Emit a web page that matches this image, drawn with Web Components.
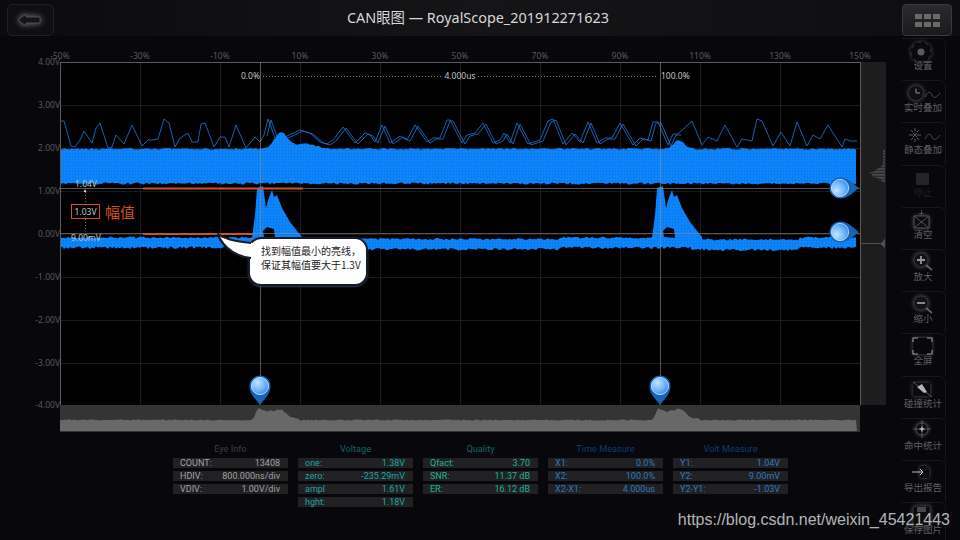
<!DOCTYPE html>
<html>
<head>
<meta charset="utf-8">
<title>CAN眼图</title>
<style>
	html, body { margin: 0; height: 100%; background: #07070c; overflow: hidden; }
	body { font-family: "Noto Sans", "Noto Sans CJK SC", sans-serif; }
</style>
</head>
<body>
<scope-app>
	<scope-header slot="header">CAN眼图 — RoyalScope_201912271623</scope-header>
	<scope-plot slot="plot">
		<callout-bubble>找到幅值最小的亮线，<br>保证其幅值要大于1.3V</callout-bubble>
	</scope-plot>
	<info-strip slot="info">
		<info-panel heading="Eye Info" style="--head:#3f3f44;--val:#a2a2a2">
			<info-row><span slot="k">COUNT:</span>13408</info-row>
			<info-row><span slot="k">HDIV:</span>800.000ns/div</info-row>
			<info-row><span slot="k">VDIV:</span>1.00V/div</info-row>
		</info-panel>
		<info-panel heading="Voltage" style="--head:#0d6668;--val:#1fa4a6">
			<info-row><span slot="k">one:</span>1.38V</info-row>
			<info-row><span slot="k">zero:</span>-235.29mV</info-row>
			<info-row><span slot="k">ampl</span>1.61V</info-row>
			<info-row><span slot="k">hght:</span>1.18V</info-row>
		</info-panel>
		<info-panel heading="Quality" style="--head:#0d6a60;--val:#1fb299">
			<info-row><span slot="k">Qfact:</span>3.70</info-row>
			<info-row><span slot="k">SNR:</span>11.37 dB</info-row>
			<info-row><span slot="k">ER:</span>16.12 dB</info-row>
		</info-panel>
		<info-panel heading="Time Measure" style="--head:#0e3c78;--val:#3078c2">
			<info-row><span slot="k">X1:</span>0.0%</info-row>
			<info-row><span slot="k">X2:</span>100.0%</info-row>
			<info-row><span slot="k">X2-X1:</span>4.000us</info-row>
		</info-panel>
		<info-panel heading="Volt Measure" style="--head:#0e3c78;--val:#3078c2">
			<info-row><span slot="k">Y1:</span>1.04V</info-row>
			<info-row><span slot="k">Y2:</span>9.00mV</info-row>
			<info-row><span slot="k">Y2-Y1:</span>-1.03V</info-row>
		</info-panel>
	</info-strip>
	<tool-bar slot="tools">
		<tool-button icon="gear" shift="0">设置</tool-button>
		<tool-button icon="clock" shift="-2">实时叠加</tool-button>
		<tool-button icon="scatter" shift="-2">静态叠加</tool-button>
		<tool-button icon="stop" shift="-3" off>停止</tool-button>
		<tool-button icon="clear" shift="-4">清空</tool-button>
		<tool-button icon="plus" shift="-3">放大</tool-button>
		<tool-button icon="minus" shift="-2">缩小</tool-button>
		<tool-button icon="full" shift="-2">全屏</tool-button>
		<tool-button icon="hit" shift="-4">碰撞统计</tool-button>
		<tool-button icon="cross" shift="-5">命中统计</tool-button>
		<tool-button icon="export" shift="-3">导出报告</tool-button>
		<tool-button icon="save" shift="-4">保存图片</tool-button>
	</tool-bar>
	<water-mark slot="mark">https://blog.csdn.net/weixin_45421443</water-mark>
</scope-app>

<script>
window.customElements.define('scope-app',
	class extends HTMLElement {
		constructor() {
			super()
			this.attachShadow({ mode: "open" })
			this.shadowRoot.innerHTML = `
			<style>
				:host { display:grid; grid-template-columns:902px 58px; grid-template-rows:36px 1fr; width:960px; height:540px; position:relative; overflow:hidden; }
				.head { grid-column:1 / 3; }
				.left { display:flex; flex-direction:column; }
			</style>
			<div class="head"><slot name="header"></slot></div>
			<div class="left"><slot name="plot"></slot><slot name="info"></slot></div>
			<div><slot name="tools"></slot></div>
			<slot name="mark"></slot>
			`
		}
	}
)

window.customElements.define('scope-header',
	class extends HTMLElement {
		constructor() {
			super()
			this.attachShadow({ mode: "open" })
			this.shadowRoot.innerHTML = `
			<style>
				:host { display:block; height:36px; background:linear-gradient(90deg,#0b0b0e,#151517 50%,#0e0e11); }
				.bar { display:grid; grid-template-columns:47px 1fr 50px; align-items:start; height:100%; padding:4px 8px 0 7px; box-sizing:border-box; }
				.back { height:32px; box-sizing:border-box; border:1px solid #202023; border-radius:5px; background:#0f0f12; display:flex; align-items:center; justify-content:center; padding-right:3px; }
				.back svg { filter:drop-shadow(0 0 3px rgba(255,255,255,.45)); }
				.title { text-align:center; color:#d8d8d8; font-size:14.4px; line-height:28px; }
				.menu { height:32px; box-sizing:border-box; border:1px solid #3a3a3e; border-radius:4px; background:linear-gradient(#2b2b2e,#1a1a1c); display:grid; grid-template-columns:repeat(3,7px); grid-auto-rows:5px; gap:3px 2px; justify-content:center; align-content:center; }
				.menu i { background:#6a6a6a; }
			</style>
			<div class="bar">
				<div class="back"><svg width="24" height="14" viewBox="0 0 24 14"><path d="M1 7 9 1V4H23V10H9V13Z" fill="#151517" stroke="#4c4c4c"/></svg></div>
				<div class="title"><slot></slot></div>
				<div class="menu"><i></i><i></i><i></i><i></i><i></i><i></i></div>
			</div>
			`
		}
	}
)

window.customElements.define('scope-plot',
	class extends HTMLElement {
		// deterministic noise so every photograph is the same
		rand() {
			this.seed = (this.seed * 16807) % 2147483647
			return this.seed / 2147483647
		}

		bump(x) {
			let a = 16 * Math.exp(-(((x - 281) / 9) ** 2)) + 5 * Math.exp(-(((x - 305) / 16) ** 2))
			let b = 9 * Math.exp(-(((x - 679) / 7) ** 2))
			return a + b
		}

		bands() {
			let top = [], bot = [], top2 = [], bot2 = []
			for (let x = 60; x <= 857; x += 2) {
				top.push(`${x},${(148 + this.rand() * 1.6 - this.bump(x)).toFixed(1)}`)
				bot.unshift(`${x},${(182.5 + this.rand() * 2).toFixed(1)}`)
				let drop = 0
				if (x > 295 && x < 560) drop = 1.5
				if (x > 690 && x < 800) drop = 2
				top2.push(`${x},${(236.5 + drop + this.rand() * 2).toFixed(1)}`)
				bot2.unshift(`${x},${(246.5 + drop + this.rand() * 2.5).toFixed(1)}`)
			}
			return [`M${top.concat(bot).join('L')}Z`, `M${top2.concat(bot2).join('L')}Z`]
		}

		spike(ox) {
			let body = [[-8,238],[-5,215],[-3,188],[3,186],[6,208],[8,200],[12,190],[14,197],[17,195],[22,208],[30,222],[42,237],[42,246],[-8,246]]
			let hole = [[3,231],[7,227],[14,229],[15,238],[4,237]]
			let s = a => 'M' + a.map(p => `${p[0] + ox},${p[1]}`).join('L') + 'Z'
			return `<path d="${s(body)}" fill="url(#ripple)"/><path d="${s(hole)}" fill="#02040a"/>`
		}

		histBottom() {
			let pts = []
			let shape = [[-7,0],[-2,12],[3,10],[7,8],[10,10],[14,9],[18,11],[22,10],[30,3],[40,1]]
			for (let x = 60; x <= 857; x += 2) {
				let h = 0
				for (let ox of [260, 660]) {
					let d = x - ox
					for (let i = 0; i < shape.length - 1; i++) {
						let [a, ha] = shape[i], [b, hb] = shape[i + 1]
						if (d >= a && d < b) h = ha + (hb - ha) * (d - a) / (b - a)
					}
				}
				pts.push(`${x},${(420 - h + this.rand() * 1.2 - .6).toFixed(1)}`)
			}
			return `M60,431L${pts.join('L')}L857,431Z`
		}

		histRight() {
			let out = ''
			for (let y = 150; y < 183; y += 1.5) {
				let len = 2 + 15 * Math.exp(-(((y - 173) / 5) ** 2)) * (.5 + this.rand() * .5)
				out += `<rect x="${885 - len}" y="${y}" width="${len}" height=".7"/>`
			}
			for (let y = 239; y < 248; y += 1) {
				let len = y == 243 ? 25 : 5 * Math.exp(-(((y - 243) / 3) ** 2)) * (.6 + this.rand() * .4)
				out += `<rect x="${885 - len}" y="${y}" width="${len}" height=".8"/>`
			}
			return out
		}

		pin(transform) {
			return `<g transform="${transform}">
				<path d="M0,19 C-3,14 -10.5,9 -10.5,0 A10.5,10.5 0 1 1 10.5,0 C10.5,9 3,14 0,19Z" fill="#1763b4"/>
				<circle r="8.6" fill="url(#pinfill)" stroke="#d3eaff" stroke-width=".8"/>
			</g>`
		}

		template() {
			let line = [[60,121],[64,121],[71,146],[75,147],[80,140],[84,131],[92,143],[96,128],[100,123],[108,148],[112,147],[116,135],[124,144],[132,125],[142,146],[148,140],[152,140],[158,139],[164,119],[169,123],[175,147],[180,138],[188,133],[192,142],[198,142],[201,124],[205,123],[214,147],[220,137],[225,137],[229,147],[236,125],[246,148],[255,137],[260,142],[264,135],[268,119],[275,138],[285,137],[300,130],[310,133],[320,142],[327,144],[333,140],[343,127],[355,143],[365,133],[370,135],[375,142],[382,125],[390,143],[400,136],[407,140],[415,125],[427,142],[433,138],[440,138],[447,120],[450,120],[462,143],[467,135],[475,133],[483,123],[493,143],[500,140],[504,133],[510,143],[517,123],[528,144],[540,140],[548,121],[553,119],[563,144],[572,133],[580,142],[588,122],[597,143],[605,138],[612,138],[620,123],[633,145],[640,138],[648,140],[653,122],[658,122],[668,145],[673,134],[678,134],[692,121],[702,145],[708,137],[717,141],[725,125],[737,147],[742,139],[752,141],[757,119],[762,121],[773,146],[781,132],[790,146],[797,122],[807,146],[813,135],[820,139],[828,125],[842,147],[845,139],[850,141],[857,141]]
			let main = line.map(p => p.join(',')).join(' ')
			let ghost = line.filter(p => p[0] > 262 && p[0] < 680).map(p => `${p[0] + 3},${p[1] + 1}`).join(' ')
			let ys = [[62,'4.00V'],[105,'3.00V'],[148,'2.00V'],[191,'1.00V'],[234,'0.00V'],[277,'-1.00V'],[320,'-2.00V'],[363,'-3.00V'],[405,'-4.00V']]
			let pct = ['-50%','-30%','-10%','10%','30%','50%','70%','90%','110%','130%','150%']
			let grid = ''
			ys.slice(1, -1).forEach(y => grid += `<line x1="60" x2="860" y1="${y[0]}" y2="${y[0]}"/>`)
			pct.forEach((p, i) => grid += `<line x1="${60 + i * 80}" x2="${60 + i * 80}" y1="62" y2="405"/>`)
			let yLabels = ys.map(y => `<text x="60" y="${y[0] + 3}" text-anchor="end">${y[1]}</text>`).join('')
			let xLabels = pct.map((p, i) => `<text x="${60 + i * 80}" y="59" text-anchor="middle">${p}</text>`).join('')
			let [b1, b2] = this.bands()
			return `
			<style>
				:host { display:block; position:relative; width:890px; height:404px; flex:none; }
				svg { display:block; font-family:"Noto Sans","Noto Sans CJK SC",sans-serif; }
				.grid line { stroke:#1a1a1a; stroke-width:1; shape-rendering:crispEdges; }
				.ax text { fill:#5a5a5a; font-size:8.5px; }
				.note { fill:#c4c4c4; font-size:8.5px; }
			</style>
			<svg width="890" height="404" viewBox="0 36 890 404">
				<defs>
					<radialGradient id="pinfill" cx=".35" cy=".3" r=".85">
						<stop offset="0" stop-color="#c4e4ff"/><stop offset=".55" stop-color="#6db4fb"/><stop offset="1" stop-color="#1f7fe6"/>
					</radialGradient>
					<pattern id="ripple" width="3" height="3" patternUnits="userSpaceOnUse">
						<rect width="3" height="3" fill="#0c84fb"/><rect width="1" height="1" fill="#0a6fd6"/>
					</pattern>
				</defs>
				<rect x="60" y="62" width="800" height="343" fill="#000"/>
				<rect x="861" y="62" width="25" height="343" fill="#1d1d1e"/>
				<g class="grid">${grid}</g>
				<g class="ax">${yLabels}${xLabels}</g>
				<polyline points="${ghost}" fill="none" stroke="#1c6cc4" stroke-width=".9"/>
				<polyline points="${main}" fill="none" stroke="#1c6cc4" stroke-width=".9"/>
				<path d="${b1}" fill="url(#ripple)"/>
				<path d="${b2}" fill="url(#ripple)"/>
				${this.spike(260)}${this.spike(660)}
				<g stroke="#5c5c5c" shape-rendering="crispEdges">
					<line x1="60" x2="860" y1="62" y2="62"/>
					<line x1="60" x2="60" y1="62" y2="432"/>
					<line x1="860" x2="860" y1="62" y2="405"/>
				</g>
				<g stroke="#8a8a8a" stroke-opacity=".62" shape-rendering="crispEdges">
					<line x1="60" x2="860" y1="188" y2="188"/>
					<line x1="60" x2="860" y1="233" y2="233"/>
					<line x1="260" x2="260" y1="62" y2="405"/>
					<line x1="660" x2="660" y1="62" y2="405"/>
				</g>
				<rect x="60" y="405" width="800" height="27" fill="#343434"/>
				<path d="${this.histBottom()}" fill="#686868"/>
				<g fill="#5e5e5e">${this.histRight()}</g>
				<g stroke="#cf5226" stroke-width="2">
					<line x1="143" x2="303" y1="188.5" y2="188.5"/>
					<line x1="143" x2="253" y1="234" y2="234"/>
				</g>
				<g stroke="#777" stroke-dasharray="1 2" shape-rendering="crispEdges">
					<line x1="263" x2="442" y1="76" y2="76"/>
					<line x1="478" x2="658" y1="76" y2="76"/>
					<line x1="85" x2="85" y1="192" y2="203"/>
					<line x1="85" x2="85" y1="219" y2="231"/>
					<line x1="460" x2="460" y1="70" y2="82" stroke="#444"/>
				</g>
				<path d="M85,189 83.6,192H86.4Z" fill="#ddd"/>
				<text class="note" x="260" y="79" text-anchor="end">0.0%</text>
				<text class="note" x="460" y="79" text-anchor="middle">4.000us</text>
				<text class="note" x="661" y="79">100.0%</text>
				<text class="note" x="75" y="187">1.04V</text>
				<text class="note" x="71" y="241">9.00mV</text>
				<rect x="71.5" y="204.5" width="28" height="14" fill="#000" stroke="#cf5226"/>
				<text class="note" x="85.5" y="215" text-anchor="middle">1.03V</text>
				<text x="105" y="217.5" fill="#cf5226" font-size="15">幅值</text>
				${this.pin('translate(260,386)')}
				${this.pin('translate(660,386)')}
				${this.pin('translate(840,188) rotate(-90)')}
				${this.pin('translate(840,232) rotate(-90)')}
			</svg>
			<slot></slot>
			`
		}

		constructor() {
			super()
			this.seed = 4711
			this.attachShadow({ mode: "open" })
			this.shadowRoot.innerHTML = this.template()
		}
	}
)

window.customElements.define('callout-bubble',
	class extends HTMLElement {
		constructor() {
			super()
			this.attachShadow({ mode: "open" })
			this.shadowRoot.innerHTML = `
			<style>
				:host { position:absolute; left:248px; top:201px; width:120px; height:49px; box-sizing:border-box; background:#fff; border:2.5px solid #161b2a; border-radius:13px; padding:5px 0 0 11px; color:#222; font-size:10px; line-height:14px; white-space:nowrap; font-family:"Noto Sans CJK SC","Noto Sans",sans-serif; box-shadow:0 1px 2px rgba(60,70,100,.8); }
				svg { position:absolute; left:-34px; top:-8px; overflow:visible; }
			</style>
			<svg width="40" height="34" viewBox="0 0 40 34"><path d="M1.5 2.5C8 8 24 11 37 12V27C24 26 8 20 1.5 2.5Z" fill="#fff"/><path d="M1.5 2.5C8 8 24 11 35 12M35 27C24 26 8 20 1.5 2.5" fill="none" stroke="#161b2a" stroke-width="2.2"/></svg>
			<slot></slot>
			`
		}
	}
)

window.customElements.define('info-strip',
	class extends HTMLElement {
		constructor() {
			super()
			this.attachShadow({ mode: "open" })
			this.shadowRoot.innerHTML = `
			<style>
				:host { display:flex; gap:10px; padding:3px 0 0 173px; width:800px; font-family:Roboto,sans-serif; }
			</style>
			<slot></slot>
			`
		}
	}
)

window.customElements.define('info-panel',
	class extends HTMLElement {
		constructor() {
			super()
			this.attachShadow({ mode: "open" })
			this.shadowRoot.innerHTML = `
			<style>
				:host { display:block; width:115px; flex:none; }
				h4 { margin:0 0 3px; font-weight:400; font-size:9.2px; line-height:12px; text-align:center; color:var(--head); }
				.rows { display:grid; gap:3px; }
			</style>
			<h4>${this.getAttribute('heading')}</h4>
			<div class="rows"><slot></slot></div>
			`
		}
	}
)

window.customElements.define('info-row',
	class extends HTMLElement {
		constructor() {
			super()
			this.attachShadow({ mode: "open" })
			this.shadowRoot.innerHTML = `
			<style>
				:host { display:flex; justify-content:space-between; height:10px; line-height:10px; padding:0 8px 0 7px; background:#212123; color:var(--val); font-size:9px; }
			</style>
			<slot name="k"></slot><slot></slot>
			`
		}
	}
)

const TOOL_ICONS = {
	gear: `<g class="glow"><circle cx="19" cy="13" r="8" fill="#0b0b0d" stroke="#0b0b0d" stroke-width="3"/><circle cx="19" cy="13" r="9.2" fill="none" stroke="#0b0b0d" stroke-width="3" stroke-dasharray="3.6 3.63"/></g><circle cx="19" cy="13" r="3.5" fill="#5c5c5c"/>`,
	clock: `<circle class="glow" cx="14" cy="14" r="7.5" fill="#101013" stroke="#2c2c2f"/><path d="M14 9.5V14H18" fill="none" stroke="#909090"/><path d="M23 18c3-6 5-6 7-2s4 3 8-2" fill="none" stroke="#5c5c5c" stroke-width=".8"/>`,
	scatter: `<path d="M13 7v3M9 9l2 2M17 9l-2 2M7 14h4M15 14h4M9 19l2-2M17 19l-2-2M13 18v3M11 12l4 4M15 12l-4 4" stroke="#5c5c5c"/><path d="M23 18c3-6 5-6 7-2s4 3 8-2" fill="none" stroke="#5c5c5c" stroke-width=".8"/>`,
	stop: `<rect x="14" y="10" width="13" height="12" rx="1" fill="#252527"/>`,
	clear: `<rect class="glow" x="12" y="12" width="15" height="12" fill="#0d0d10"/><path d="M12 12h15v12h-15zM12 12l15 12M27 12l-15 12" fill="none" stroke="#505050"/><path d="M19.5 6v6M17 9.5h5" stroke="#484848"/>`,
	plus: `<path d="M24 18l6 5" stroke="#5c5c5c" stroke-width="2"/><circle class="glow" cx="19" cy="13" r="7" fill="#131316" stroke="#333337"/><path d="M15 13h8M19 9v8" stroke="#959595" stroke-width="1.8"/>`,
	minus: `<path d="M24 18l6 5" stroke="#5c5c5c" stroke-width="2"/><circle class="glow" cx="19" cy="13" r="7" fill="#131316" stroke="#333337"/><path d="M15 13h8" stroke="#959595" stroke-width="1.8"/>`,
	full: `<rect class="glow" x="11" y="6" width="19" height="16" fill="#08080b"/><path d="M11 10V6h5M25 6h5v4M30 18v4h-5M16 22h-5v-4" fill="none" stroke="#9c9c9c" stroke-width="1.1"/>`,
	hit: `<rect class="glow" x="11" y="10" width="17" height="13" fill="#0b0b0e"/><path d="M11 9l19 15" stroke="#5c5c5c"/><path d="M15 14l5-3 5 8-3 1z" fill="#b4b4b4"/>`,
	cross: `<circle class="glow" cx="20" cy="15" r="6" fill="#0c0c0f" stroke="#484848"/><path d="M20 6v18M11 15h18" stroke="#666" stroke-width=".8"/><path d="M20 12.5v5M17.5 15h5" stroke="#e0e0e0"/>`,
	export: `<path class="glow" d="M18 8h6l3 3v9h-9z" fill="#0c0c0f"/><path d="M10 14h11M18 11l3 3-3 3" fill="none" stroke="#c0c0c0"/>`,
	save: `<path class="glow" d="M11 9l3-2h14v20h-17z" fill="#0c0c0f" stroke="#2c2c2c"/><rect x="15" y="8" width="9" height="5" fill="#484848"/>`
}

window.customElements.define('tool-bar',
	class extends HTMLElement {
		constructor() {
			super()
			this.attachShadow({ mode: "open" })
			this.shadowRoot.innerHTML = `
			<style>
				:host { display:grid; grid-auto-rows:42.2px; width:44px; padding-top:2px; }
			</style>
			<slot></slot>
			`
		}
	}
)

window.customElements.define('tool-button',
	class extends HTMLElement {
		constructor() {
			super()
			this.attachShadow({ mode: "open" })
			this.shadowRoot.innerHTML = `
			<style>
				:host { display:block; box-sizing:border-box; width:44px; border-top:1px solid #18181b; border-right:1px solid #18181b; border-radius:0 6px 0 0; color:#606060; cursor:pointer; }
				:host([off]) { color:#202022; }
				svg { display:block; overflow:visible; }
				.glow { filter:drop-shadow(0 0 2px rgba(255,255,255,.32)); }
				.label { text-align:center; font-size:9.5px; line-height:10px; white-space:nowrap; margin:-1px 0 0 -1px; font-family:"Noto Sans CJK SC","Noto Sans",sans-serif; }
			</style>
			<svg width="44" height="22" viewBox="0 0 44 22"><g transform="translate(0 ${this.getAttribute('shift')})">${TOOL_ICONS[this.getAttribute('icon')]}</g></svg>
			<div class="label"><slot></slot></div>
			`
		}
	}
)

window.customElements.define('water-mark',
	class extends HTMLElement {
		constructor() {
			super()
			this.attachShadow({ mode: "open" })
			this.shadowRoot.innerHTML = `
			<style>
				:host { position:absolute; right:10px; bottom:10px; color:rgba(225,225,225,.8); font:16px/20px "Liberation Sans",sans-serif; white-space:nowrap; pointer-events:none; }
			</style>
			<slot></slot>
			`
		}
	}
)
</script>
</body>
</html>
